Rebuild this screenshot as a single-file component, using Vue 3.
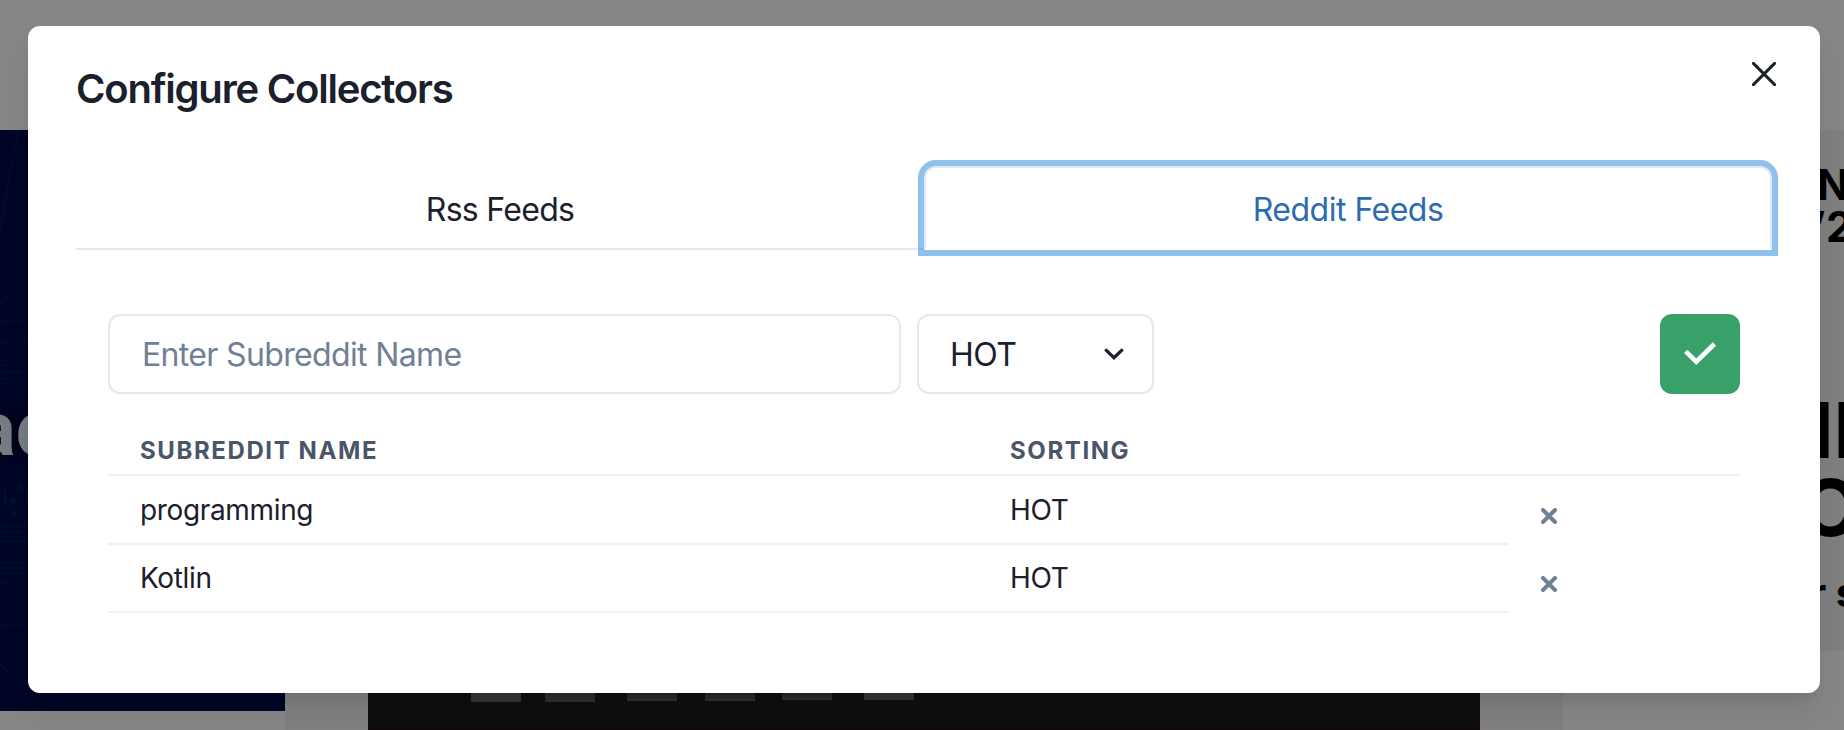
<script setup>
const tabs = [
  { label: 'Rss Feeds', active: false },
  { label: 'Reddit Feeds', active: true },
]
const rows = [
  { name: 'programming', sorting: 'HOT' },
  { name: 'Kotlin', sorting: 'HOT' },
]
</script>

<template>
  <div class="page">
    <div class="feed" aria-hidden="true">
      <div class="left">
        <div class="cover">
          <svg class="circuit" width="285" height="581" viewBox="0 130 285 581" fill="none" stroke="#000d31" stroke-width="1.5">
            <path d="M18 130L0 230M16 260L28 271M0 304L5 299H28M0 321H28M0 342H22L28 336M0 365H28M0 372H28M0 379H28M5 510V488L25 469M13 497V490L28 475M21 488L28 480M5 500L14 514M0 527H22L28 521M0 532H28M0 537H28M0 542H28M0 562H28M0 568H28M0 573H28M0 582H28M0 616H28M0 625H28M0 664L11 675H28" />
            <g fill="#000d31" stroke="none">
              <circle cx="21" cy="488" r="3.5" /><circle cx="13" cy="501" r="3.5" /><circle cx="14" cy="514" r="3.5" /><circle cx="28" cy="496" r="3" />
            </g>
          </svg>
          <span class="cover-text">ac</span>
        </div>
      </div>
      <div class="middle">
        <div class="photo">
          <i v-for="n in 6" :key="n" :class="'key k' + n"></i>
        </div>
      </div>
      <div class="right">
        <div class="poster">
          <span class="p-text p1">N</span>
          <span class="p-text p2">’22</span>
          <span class="p-text p3">II</span>
          <span class="p-text p4">O</span>
          <span class="p-text p5">r s</span>
        </div>
      </div>
    </div>

    <section class="modal" role="dialog">
      <header class="head">
        <h2 class="title">Configure Collectors</h2>
        <button class="close" aria-label="Close">
          <svg width="24" height="24" viewBox="0 0 24 24" fill="none" stroke="#1a202c" stroke-width="2.9" stroke-linecap="round">
            <path d="M1.4 1.4L22.6 22.6M22.6 1.4L1.4 22.6" />
          </svg>
        </button>
      </header>

      <nav class="tabs">
        <button v-for="t in tabs" :key="t.label" class="tab" :class="{ active: t.active }"><span>{{ t.label }}</span></button>
      </nav>

      <div class="panel">
        <div class="form">
          <div class="input"><span class="ph">Enter Subreddit Name</span></div>
          <div class="select">
            <span class="hot">HOT</span>
            <svg width="20" height="12" viewBox="0 0 20 12" fill="none" stroke="#1a202c" stroke-width="3.2">
              <path d="M1.3 1.3L10 9.7L18.7 1.3" />
            </svg>
          </div>
          <button class="submit" aria-label="Add">
            <svg width="32" height="24" viewBox="0 0 32 24" fill="none" stroke="#fff" stroke-width="4.6">
              <path d="M1.7 9.3L12.3 19.7L30.4 2" />
            </svg>
          </button>
        </div>

        <div class="table">
          <div class="row thead">
            <div class="cell">Subreddit Name</div>
            <div class="cell">Sorting</div>
            <div class="cell"></div>
          </div>
          <div v-for="r in rows" :key="r.name" class="row">
            <div class="cell">{{ r.name }}</div>
            <div class="cell">{{ r.sorting }}</div>
            <div class="action">
              <svg width="16" height="16" viewBox="0 0 16 16" fill="none" stroke="#718096" stroke-width="4" stroke-linecap="round">
                <path d="M2 2L14 14M14 2L2 14" />
              </svg>
            </div>
          </div>
        </div>
      </div>
    </section>
  </div>
</template>

<style>
html, body { margin: 0; overflow: hidden; background: #858585; }
</style>

<style scoped>
* { box-sizing: border-box; }
.page {
  position: relative; width: 1844px; height: 730px; overflow: hidden;
  padding: 26px 24px 0 28px; background: #868686;
  font-family: Inter, "Liberation Sans", sans-serif; color: #1a202c;
}
button { border: 0; padding: 0; background: none; font: inherit; color: inherit; }
svg { display: block; flex: none; }

.feed {
  position: absolute; inset: 130px 0 0; display: grid;
  grid-template-columns: 285px 1278px 281px;
}
.cover { position: relative; height: 581px; background: #000526; overflow: hidden; }
.cover-text {
  position: absolute; left: -25px; top: 259px; font: 700 76px/80px Roboto, sans-serif;
  color: #737d83; text-shadow: 0 0 8px #000;
}
.middle { background: #808080; padding: 0 83px; }
.photo { position: relative; height: 100%; background: #0f0f0f; border-bottom: 1px solid #1a0508; }
.key {
  position: absolute; top: 550px; width: 50px; height: 21px;
  background: linear-gradient(#222 60%, #343434); filter: blur(.7px);
}
.k1 { left: 103px; height: 22px; background: #343434; }
.k2 { left: 177px; height: 22px; background: #2e2e2e; }
.k3 { left: 259px; }
.k4 { left: 337px; }
.k5 { left: 414px; height: 20px; }
.k6 { left: 496px; height: 20px; background: #343434; }
.poster { position: relative; height: 521px; background: #7f7f7f; overflow: hidden; }
.p-text { position: absolute; font-weight: 700; color: #000; white-space: nowrap; line-height: 1; }
.p1 { left: 254px; top: 34px; font-size: 42px; }
.p2 { left: 250px; top: 76px; font-size: 42px; }
.p3 { left: 249px; top: 262px; font-size: 77px; }
.p4 { left: 237px; top: 338px; font-size: 79px; }
.p5 { left: 247px; top: 443px; font-size: 40px; }

.modal {
  position: relative; width: 1792px; height: 667px; padding: 0 48px;
  background: #fff; border-radius: 12px;
  box-shadow: 0 20px 30px -6px rgba(0, 0, 0, .1), 0 8px 12px -4px rgba(0, 0, 0, .05);
}
.head { display: flex; justify-content: space-between; height: 140px; }
.title { margin: 33px 0 0; font-size: 40px; line-height: 60px; font-weight: 600; letter-spacing: -1.2px; }
.close { width: 24px; height: 24px; margin: 36px -4px 0 0; }

.tabs { display: flex; height: 84px; border-bottom: 2px solid #e2e8f0; }
.tab {
  flex: 1; height: 84px; padding-top: 3px; font-size: 32px; line-height: 48px;
  border: 2px solid transparent; border-radius: 12px 12px 0 0; letter-spacing: -.7px;
}
.tab.active {
  color: #2b6cb0; border-color: #e2e8f0; border-bottom-color: #fff; background: #fff;
  letter-spacing: -.5px; box-shadow: 0 0 0 6px rgba(66, 153, 225, .6);
}

.panel { padding: 64px 32px 0; }
.form { display: flex; height: 80px; font-size: 32px; }
.input, .select { display: flex; align-items: center; border: 2px solid #e2e8f0; border-radius: 12px; }
.input { width: 793px; padding: 1px 0 0 32px; color: #718096; margin-right: 16px; letter-spacing: -.65px; }
.select { width: 237px; padding: 0 28px 0 31px; justify-content: space-between; }
.hot { letter-spacing: -.5px; }
.submit {
  display: flex; align-items: center; justify-content: center; width: 80px; height: 80px;
  margin-left: auto; border-radius: 12px; background: #38a169;
}

.table { padding-top: 32px; }
.row { display: grid; grid-template-columns: 870px 531px 231px; height: 68px; font-size: 28px; line-height: 40px; letter-spacing: -.35px; }
.cell { padding: 13px 32px 0; border-bottom: 2px solid #edf2f7; }
.row.thead { height: 50px; font-size: 24px; line-height: 32px; font-weight: 700; color: #4a5568; text-transform: uppercase; letter-spacing: 1.6px; }
.thead .cell { padding-top: 9px; }
.thead + .row { height: 69px; }
.thead + .row .cell { padding-top: 14px; }
.action { padding: 31px 0 0 32px; }
.thead + .row .action { padding-top: 32px; }
</style>
